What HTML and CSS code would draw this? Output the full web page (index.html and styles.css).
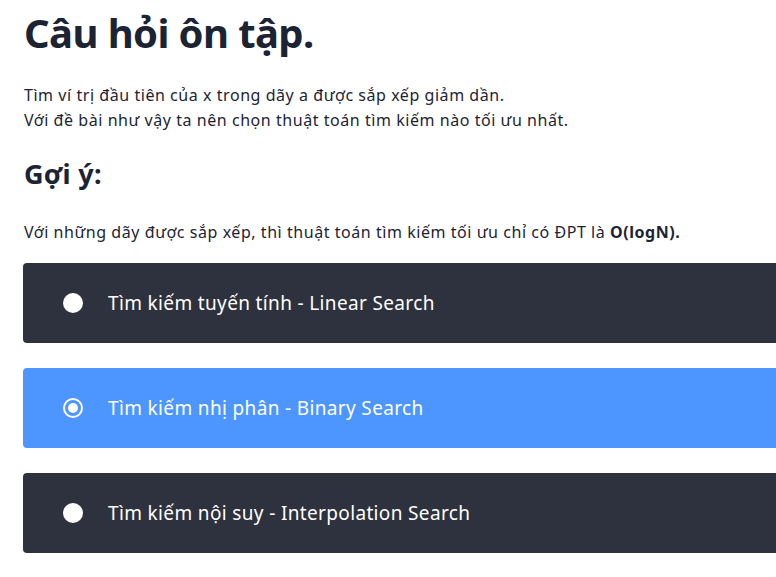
FILE: index.html
```html
<!DOCTYPE html>
<html lang="vi">
<head>
<meta charset="utf-8">
<link rel="stylesheet" href="styles.css">
</head>
<body>
<main class="page">
  <h1 class="title">Câu hỏi ôn tập.</h1>
  <p class="text">Tìm ví trị đầu tiên của x trong dãy a được sắp xếp giảm dần.<br>Với đề bài như vậy ta nên chọn thuật toán tìm kiếm nào tối ưu nhất.</p>
  <h2 class="subtitle">Gợi ý:</h2>
  <p class="text hint">Với những dãy được sắp xếp, thì thuật toán tìm kiếm tối ưu chỉ có ĐPT là <b>O(logN).</b></p>
  <div class="options">
    <div class="option">
      <span class="radio"></span>
      <span class="label">Tìm kiếm tuyến tính - Linear Search</span>
    </div>
    <div class="option selected">
      <span class="radio"></span>
      <span class="label">Tìm kiếm nhị phân - Binary Search</span>
    </div>
    <div class="option">
      <span class="radio"></span>
      <span class="label">Tìm kiếm nội suy - Interpolation Search</span>
    </div>
  </div>
</main>
</body>
</html>
```
FILE: styles.css
```css
html, body {
  margin: 0;
  padding: 0;
  background: #ffffff;
  overflow: hidden;
}
body {
  font-family: "Noto Sans", "Open Sans", sans-serif;
  color: #1d2433;
}
.page {
  padding: 8px 0 0 23px;
  margin-right: -20px;
}
.title {
  font-size: 40px;
  font-weight: 700;
  line-height: 50px;
  letter-spacing: -0.6px;
  margin: 0 0 25px 1px;
  color: #1c2434;
}
.text {
  font-size: 16px;
  line-height: 25px;
  letter-spacing: 0.55px;
  margin: 0 0 0 1px;
  color: #1d2433;
}
.subtitle {
  font-size: 27px;
  font-weight: 700;
  line-height: 34px;
  letter-spacing: 0.3px;
  margin: 24px 0 29px 1px;
  color: #1c2434;
}
.hint b {
  font-weight: 700;
}
.options {
  display: flex;
  flex-direction: column;
  gap: 25px;
  margin-top: 18px;
}
.option {
  height: 80px;
  display: flex;
  align-items: center;
  background: #2e313e;
  border-radius: 4px;
  color: #ffffff;
  padding-left: 40px;
}
.option.selected {
  background: #4d96ff;
}
.radio {
  width: 20px;
  height: 20px;
  border-radius: 50%;
  background: #ffffff;
  box-sizing: border-box;
  flex: none;
}
.selected .radio {
  background: transparent;
  border: 2px solid #ffffff;
  position: relative;
}
.selected .radio::after {
  content: "";
  position: absolute;
  left: 3px;
  top: 3px;
  width: 10px;
  height: 10px;
  border-radius: 50%;
  background: #ffffff;
}
.label {
  margin-left: 25px;
  font-size: 19px;
  line-height: 24px;
  letter-spacing: 0.35px;
}
```
